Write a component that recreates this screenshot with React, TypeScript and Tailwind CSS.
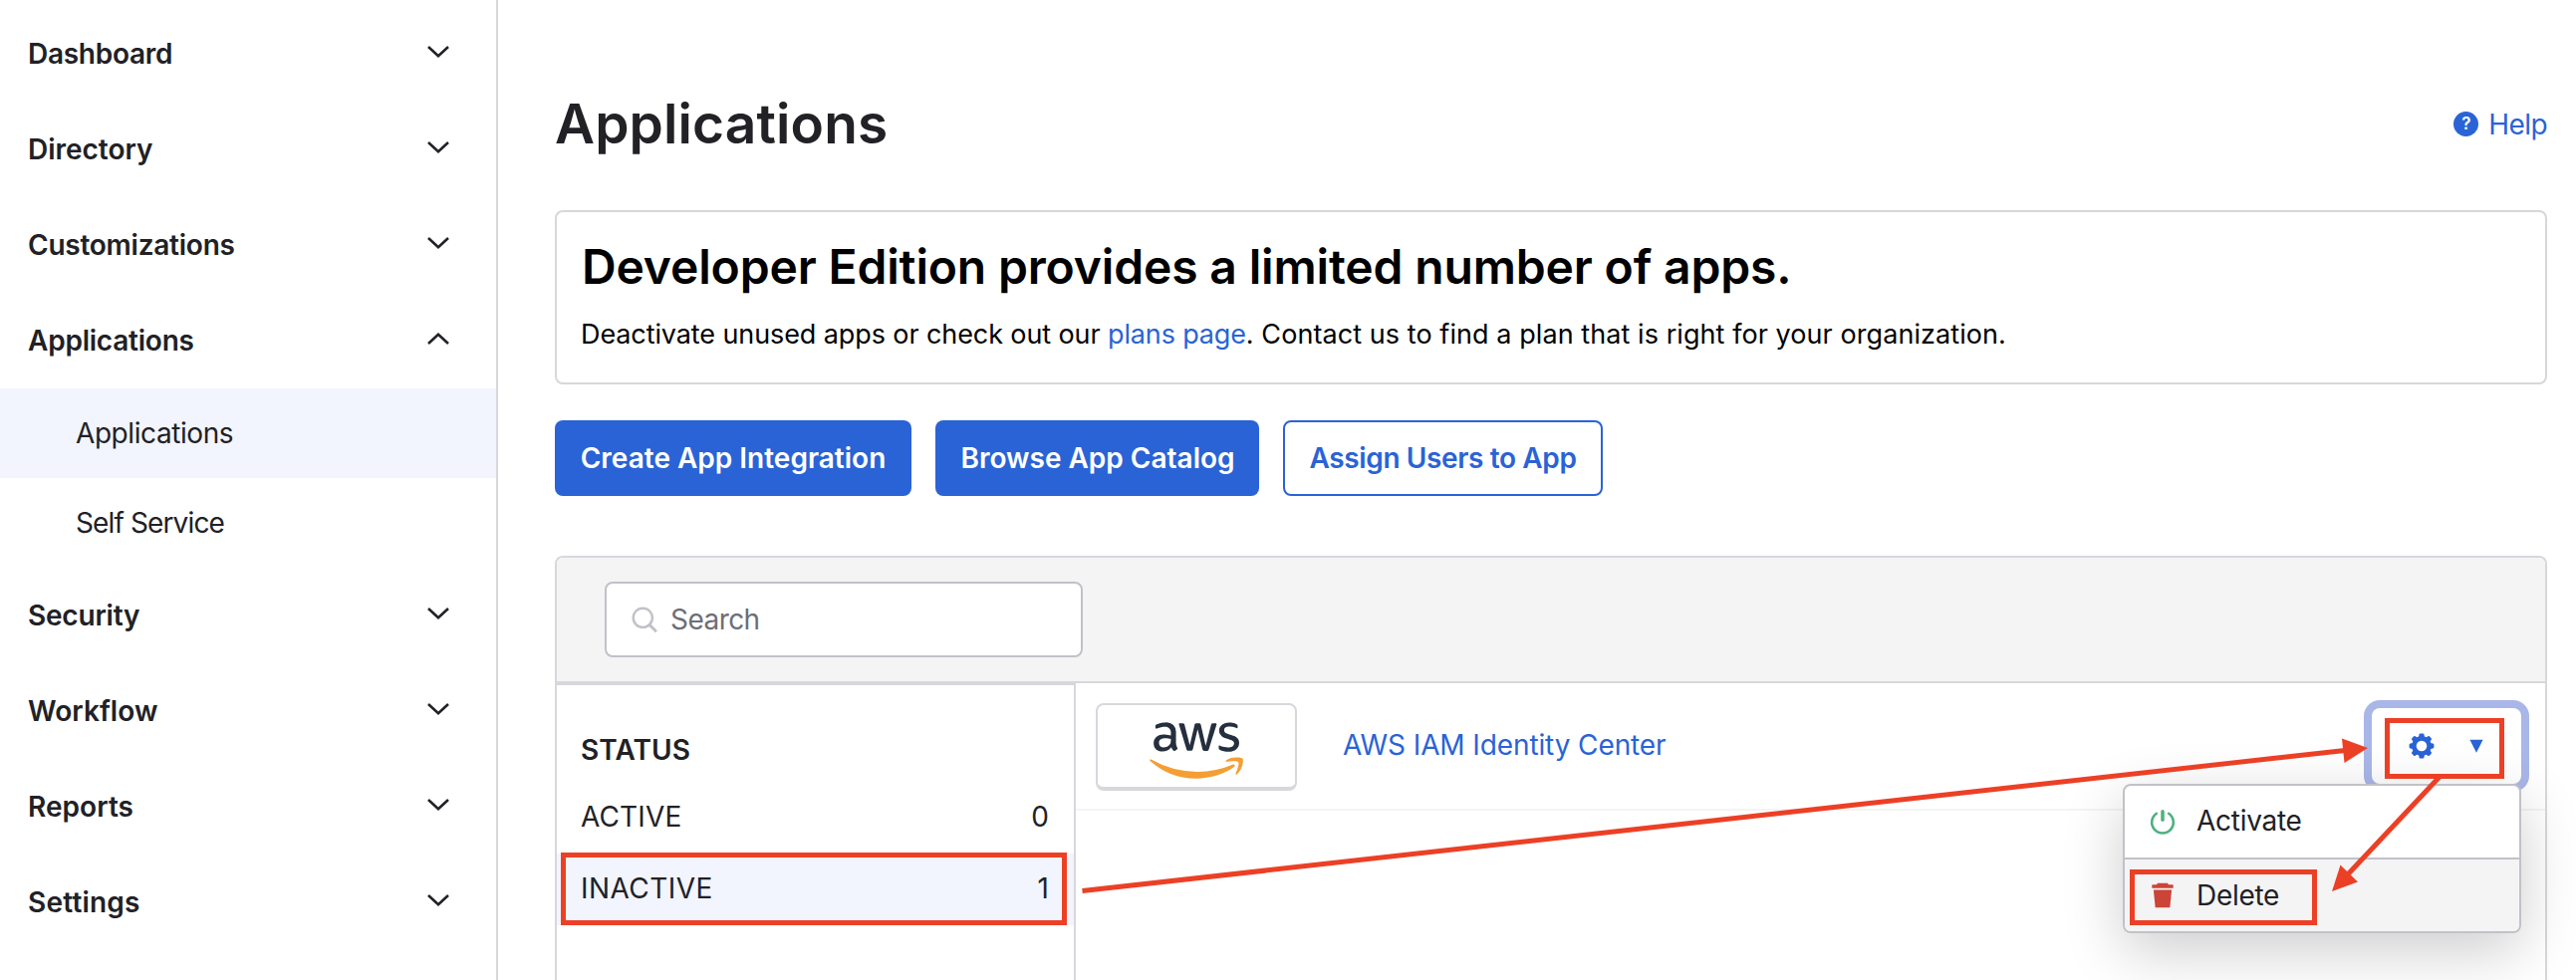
import { FaAws } from "react-icons/fa";

type NavItem = {
  label: string;
  tracking: string;
  open?: boolean;
  children?: { label: string; tracking: string; active?: boolean }[];
};

const NAV: NavItem[] = [
  { label: "Dashboard", tracking: "tracking-[-0.27px]" },
  { label: "Directory", tracking: "tracking-[-0.02px]" },
  { label: "Customizations", tracking: "tracking-[-0.24px]" },
  {
    label: "Applications",
    tracking: "tracking-[-0.22px]",
    open: true,
    children: [
      { label: "Applications", tracking: "tracking-[-0.42px]", active: true },
      { label: "Self Service", tracking: "tracking-[-0.87px]" },
    ],
  },
  { label: "Security", tracking: "tracking-[-0.2px]" },
  { label: "Workflow", tracking: "tracking-[0.05px]" },
  { label: "Reports", tracking: "tracking-[0.06px]" },
  { label: "Settings", tracking: "tracking-[0.2px]" },
];

function Chevron({ up }: { up?: boolean }) {
  return (
    <svg width="22" height="12" viewBox="0 0 22 12" fill="none" stroke="#212126" strokeWidth="2.6">
      <path d={up ? "M1 11 11 1.8 21 11" : "M1 1 11 10.2 21 1"} />
    </svg>
  );
}

function GearIcon() {
  return (
    <svg width="26" height="26" viewBox="-13 -13 26 26">
      <circle r="7.6" fill="none" stroke="#2a63d6" strokeWidth="4.6" />
      {[0, 45, 90, 135, 180, 225, 270, 315].map((angle) => (
        <path
          key={angle}
          d="M-2.9 -8.8 -2.5 -11.4Q-2.3 -12.4 -1.3 -12.4H1.3Q2.3 -12.4 2.5 -11.4L2.9 -8.8Z"
          fill="#2a63d6"
          transform={`rotate(${angle})`}
        />
      ))}
    </svg>
  );
}

function PowerIcon() {
  return (
    <svg width="26" height="26" viewBox="0 0 26 26" fill="none" stroke="#4fb07e" strokeLinecap="round">
      <path d="M6.9 4.8A10.8 10.8 0 1 0 19.1 4.8" strokeWidth="2.6" />
      <path d="M13 2.7V11.2" strokeWidth="3.5" />
    </svg>
  );
}

function TrashIcon() {
  return (
    <svg width="22" height="26" viewBox="0 0 22 26" fill="#cb4437">
      <path d="M5.4 2.2V1.5Q5.4 .8 6.1 .8H15.9Q16.6 .8 16.6 1.5V2.2H20.9Q21.7 2.2 21.7 3V5.7H.3V3Q.3 2.2 1.1 2.2Z" />
      <path d="M1.9 7.5H20.1L18.4 24.7Q18.3 25.3 17.7 25.3H4.3Q3.7 25.3 3.6 24.7Z" />
    </svg>
  );
}

function Sidebar() {
  return (
    <nav className="flex w-[500px] shrink-0 flex-col border-r-2 border-[#d7d7dc] pt-1.5">
      {NAV.map((item) => (
        <div key={item.label}>
          <div className="flex h-24 items-center justify-between pr-[47px] pl-7 font-semibold">
            <span className={item.tracking}>{item.label}</span>
            <span className="-mt-[5px]">
              <Chevron up={item.open} />
            </span>
          </div>
          {item.children?.map((child) => (
            <div
              key={child.label}
              className={`flex h-[90px] items-center pl-[76px] ${child.active ? "bg-[#f2f5fe]" : ""}`}
            >
              <span className={child.tracking}>{child.label}</span>
            </div>
          ))}
        </div>
      ))}
    </nav>
  );
}

function ActionMenu() {
  return (
    <div className="absolute top-full right-0 z-10 flex h-[150px] w-[400px] flex-col overflow-hidden rounded-lg border-2 border-[#c1c1c8] bg-white shadow-[0_18px_60px_rgba(0,0,0,0.2)]">
      <div className="flex h-[74px] items-center border-b-2 border-[#c1c1c8] pl-[25px]">
        <span className="flex w-[48px]">
          <PowerIcon />
        </span>
        <span className="-mt-0.5 -ml-px tracking-[-0.28px]">Activate</span>
      </div>
      <div className="flex flex-1 items-center bg-[#f4f4f4] pl-[27px]">
        <span className="flex w-[45px]">
          <TrashIcon />
        </span>
        <span className="-mt-px tracking-[-0.3px]">Delete</span>
      </div>
    </div>
  );
}

function AppRow() {
  return (
    <div className="flex h-32 items-start border-b-2 border-[#f4f4f4] pr-6 pl-5">
      <div className="mt-5 flex h-[88px] w-[202px] justify-center rounded-lg border-2 border-b-4 border-[#d7d7dc] bg-white pt-2">
        <span className="relative block h-[75px] w-[94px]">
          <FaAws className="absolute inset-0 h-[75px] w-[94px] text-[#252f3e] [clip-path:inset(0_0_36px_0)]" />
          <FaAws className="absolute inset-0 h-[75px] w-[94px] text-[#f59e33] [clip-path:inset(39px_0_0_0)]" />
        </span>
      </div>
      <a className="mt-11 ml-[46px] leading-9 tracking-[-0.11px] text-[#2a63d6]">AWS IAM Identity Center</a>
      <div className="relative mt-[25px] ml-auto h-[76px] w-[150px]">
        <button className="flex h-full w-full items-center rounded-lg bg-white pl-[37px] shadow-[0_0_0_8px_#a9b6e8]">
          <GearIcon />
          <svg className="ml-[35px]" width="14" height="14" viewBox="0 0 14 14">
            <path d="M.4 .8H13.6L7 13.8Z" fill="#2a63d6" />
          </svg>
        </button>
        <ActionMenu />
      </div>
    </div>
  );
}

function Applications() {
  return (
    <main className="flex min-w-0 flex-1 flex-col pt-[90px] pr-[29px] pl-[57px]">
      <header className="flex h-[68px] items-center justify-between">
        <h1 className="text-[55px] leading-[68px] font-semibold tracking-[0.13px]">Applications</h1>
        <a className="flex items-center gap-[10px] text-[#2a63d6]">
          <span className="flex size-[25px] items-center justify-center rounded-full bg-[#2a63d6] text-[17px] leading-none font-semibold text-white">
            ?
          </span>
          <span className="pt-0.5 tracking-[-0.6px]">Help</span>
        </a>
      </header>

      <section className="mt-[53px] h-[175px] rounded-lg border-2 border-[#d7d7dc] pt-[26px] pl-6 text-black">
        <h2 className="ml-px text-[48px] leading-[58px] font-semibold tracking-[-0.16px]">
          Developer Edition provides a limited number of apps.
        </h2>
        <p className="mt-[21px] text-[27px] leading-9">
          <span className="tracking-[-0.1px]">Deactivate unused apps or check out our </span>
          <a className="tracking-[-0.15px] text-[#2a63d6]">plans page</a>
          <span className="tracking-[0.07px]">. Contact us to find a plan that is right for your organization.</span>
        </p>
      </section>

      <div className="mt-9 flex gap-6 font-semibold whitespace-nowrap">
        <button className="h-[76px] w-[358px] rounded-lg bg-[#2a63d6] pb-px text-white">Create App Integration</button>
        <button className="h-[76px] w-[325px] rounded-lg bg-[#2a63d6] pb-px pl-px text-white">
          Browse App Catalog
        </button>
        <button className="h-[76px] w-[321px] rounded-lg border-2 border-[#2a63d6] bg-white pb-px tracking-[-0.37px] text-[#2a63d6]">
          Assign Users to App
        </button>
      </div>

      <section className="mt-[60px] flex flex-1 flex-col rounded-t-lg border-2 border-b-0 border-[#d7d7dc]">
        <div className="flex h-[126px] items-center rounded-t-md border-b-2 border-[#d7d7dc] bg-[#f4f4f4] pl-12">
          <div className="flex h-[76px] w-[480px] items-center rounded-lg border-2 border-[#c1c1c8] bg-white pl-[25px]">
            <svg width="26" height="26" viewBox="0 0 26 26" fill="none" stroke="#c1c1c8" strokeWidth="2.4">
              <circle cx="11.3" cy="11.3" r="9.6" />
              <path d="M18 18.4 24 24.3" strokeWidth="3" strokeLinecap="round" />
            </svg>
            <span className="ml-[13px] tracking-[-0.55px] text-[#6e6e78]">Search</span>
          </div>
        </div>
        <div className="flex flex-1">
          <aside className="w-[521px] border-t-2 border-r-2 border-[#d7d7dc] pt-[47px]">
            <h3 className="pl-6 leading-9 font-semibold tracking-[0.1px]">STATUS</h3>
            <div className="mt-3.5 flex h-[72px] items-center justify-between pr-[25px] pb-0.5 pl-6">
              <span className="tracking-[0.15px]">ACTIVE</span>
              <span>0</span>
            </div>
            <div className="flex h-[72px] items-center justify-between bg-[#f2f5fe] pr-[25px] pb-0.5 pl-6">
              <span className="tracking-[0.45px]">INACTIVE</span>
              <span>1</span>
            </div>
          </aside>
          <div className="flex-1">
            <AppRow />
          </div>
        </div>
      </section>
    </main>
  );
}

/* Red call-outs drawn over the page: the steps to delete an inactive app. */
function Annotations() {
  return (
    <svg
      className="pointer-events-none absolute inset-0 z-20"
      width="2586"
      height="984"
      viewBox="0 0 2586 984"
      fill="none"
      stroke="#ec4026"
      strokeWidth="5"
    >
      <rect x="565.5" y="858.5" width="503" height="68" />
      <rect x="2396.5" y="723.5" width="115" height="56" />
      <rect x="2140.5" y="875.5" width="183" height="51" />
      <path d="M1086.5 894.5 2354 753.5" />
      <path d="M2449 780 2355 880" />
      <path d="M2351 741.5 2377 751 2353.5 766Z" fill="#ec4026" stroke="none" />
      <path d="M2349.5 868.5 2341 895 2367 885.5Z" fill="#ec4026" stroke="none" />
    </svg>
  );
}

export default function App() {
  return (
    <div className="relative flex h-[984px] w-[2586px] overflow-hidden bg-white font-['Inter',sans-serif] text-[28px] text-[#212126]">
      <Sidebar />
      <Applications />
      <Annotations />
    </div>
  );
}
